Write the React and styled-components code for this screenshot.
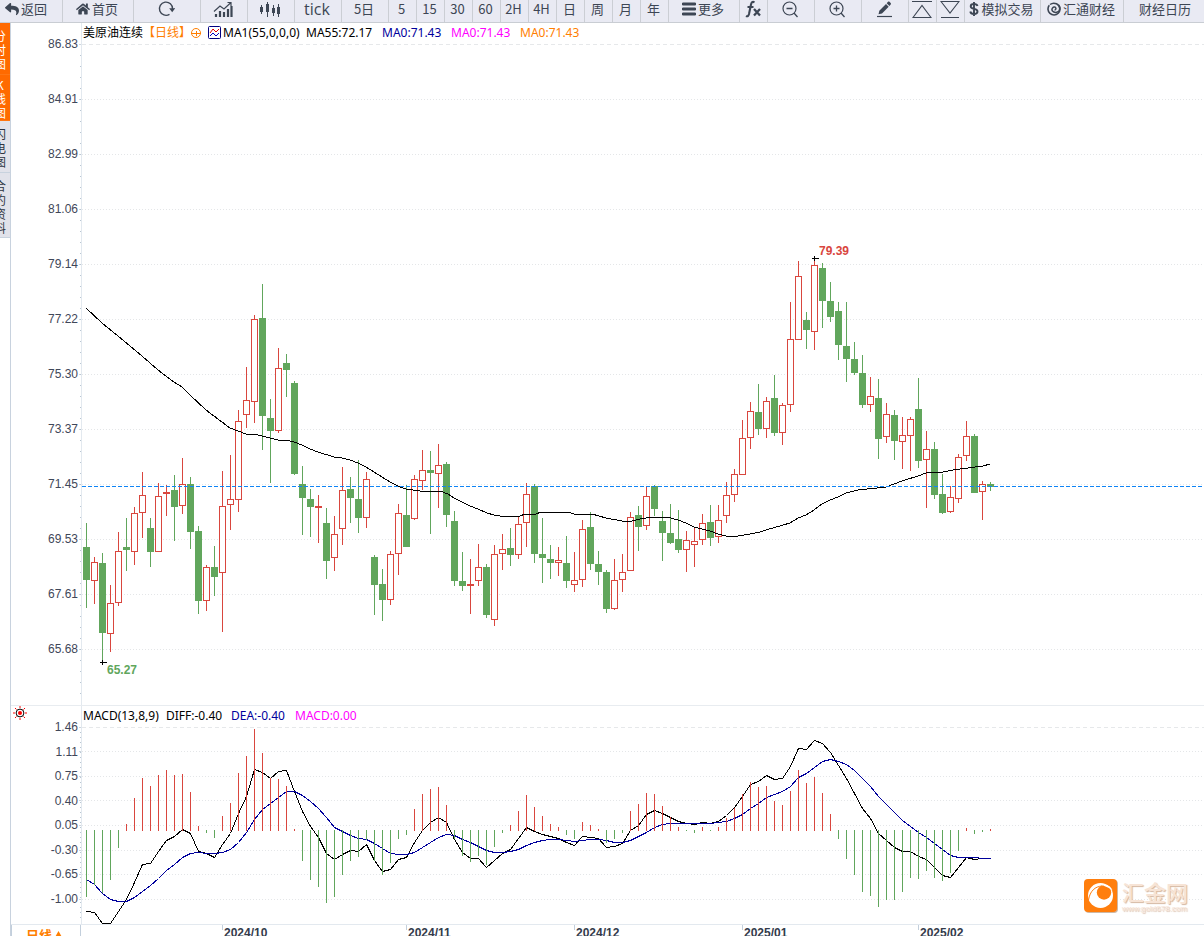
import React from "react";
import styled, { createGlobalStyle } from "styled-components";
import { FaReply, FaHome } from "react-icons/fa";

const UP = "#d9463e";
const DOWN = "#61a65c";
const INK = "#3d4654";
const CJK = '"Noto Sans CJK SC", sans-serif';

const GlobalStyle = createGlobalStyle`
  * { box-sizing: border-box; }
  body { margin: 0; background: #fff; overflow: hidden; font-family: "Liberation Sans", ${CJK}; }
  button { font: inherit; color: inherit; border: 0; padding: 0; background: none; cursor: pointer; }
`;

const Page = styled.div`
  display: flex;
  flex-direction: column;
  height: 100vh;
  overflow: hidden;
`;

const Toolbar = styled.nav`
  display: flex;
  flex: none;
  height: 23px;
  background: #e9eaf3;
  border-bottom: 1px solid #c9cdd3;
`;

const ToolButton = styled.button`
  display: flex;
  flex: ${(p) => (p.$last ? "1 0" : "0 0")} ${(p) => p.$w}px;
  align-items: center;
  justify-content: ${(p) => (p.$last ? "flex-start" : "center")};
  gap: 2px;
  && {
    padding: 0 ${(p) => p.$right || 2}px 4px ${(p) => (p.$last ? 15 : 0)}px;
    border-right: ${(p) => (p.$last ? 0 : 1)}px solid #cbced4;
    color: ${INK};
    font-family: ${(p) => (p.$latin ? '"Open Sans", sans-serif' : CJK)};
    font-size: ${(p) => (p.$latin ? 16 : 13)}px;
    line-height: 18px;
    white-space: nowrap;
  }
  svg { flex: none; }
`;

const Body = styled.div`
  display: flex;
  flex: 1;
  min-height: 0;
`;

const Sidebar = styled.aside`
  flex: none;
  width: 11px;
  border-right: 1px solid #c8d2de;
`;

const SideTab = styled.button`
  display: flex;
  justify-content: flex-end;
  width: 100%;
  overflow: hidden;
  && {
    padding: ${(p) => p.$top}px 4px ${(p) => p.$bottom}px 0;
    background: ${(p) => (p.$active ? "#ff6a00" : "#e1e2ea")};
    color: ${(p) => (p.$active ? "#fff" : "#2f3542")};
    border-bottom: 1px solid ${(p) => (p.$active ? "#ff7612" : "#c8d2de")};
    font-family: ${CJK};
    font-size: 12px;
    line-height: 14px;
  }
  span { flex: none; width: 12px; word-break: break-all; text-align: center; }
`;

const Charts = styled.main`
  display: flex;
  flex: 1;
  flex-direction: column;
  min-width: 0;
`;

const Panel = styled.section`
  display: grid;
  flex: none;
  grid-template-columns: 70px 1fr;
  border-bottom: 1px solid ${(p) => p.$line};
`;

const Axis = styled.div`
  display: flex;
  flex-direction: column;
  padding: ${(p) => p.$top}px 3px 0 0;
`;

const Scale = styled.div`
  display: flex;
  flex-direction: column;
  justify-content: space-between;
  height: ${(p) => p.$h}px;
  color: #3f4759;
  font-size: 12px;
  line-height: 14px;
  text-align: right;
`;

const PlotColumn = styled.div`
  min-width: 0;
  border-left: 1px solid #e3e9ef;
`;

const Legend = styled.div`
  display: flex;
  align-items: center;
  height: 20px;
  padding-left: 1px;
  font-family: "Noto Sans", ${CJK};
  font-size: 12px;
  line-height: 18px;
  white-space: pre;
`;

const LegendItem = styled.span`
  color: ${(p) => p.$color || "#000"};
  min-width: ${(p) => p.$w || 0}px;
`;

const LegendIcon = styled.svg`
  flex: none;
  margin-right: ${(p) => p.$gap}px;
`;

const Plot = styled.svg`
  display: block;
  width: 100%;
  height: ${(p) => p.$h}px;
  overflow: visible;
  shape-rendering: crispEdges;
`;

const DateBar = styled.div`
  display: grid;
  flex: none;
  grid-template-columns: 70px 1fr;
  height: 22px;
`;

const PeriodButton = styled.button`
  display: flex;
  justify-content: center;
  gap: 2px;
  && {
    padding-right: 3px;
    border: 1px solid #c3cfdc;
    border-top: 0;
    color: #ff7e00;
    font-family: ${CJK};
    font-size: 13px;
    font-weight: 700;
    line-height: 20px;
  }
`;

const Watermark = styled.a`
  position: absolute;
  right: 16px;
  bottom: 21px;
  display: flex;
  gap: 4px;
  color: #f7e4d6;
  font-family: ${CJK};
  text-decoration: none;
`;

const BrandText = styled.span`
  display: flex;
  flex-direction: column;
  font-size: 22px;
  font-weight: 500;
  line-height: 24px;
  text-shadow: 1px 1px 1px #d5b8a2;
  small { font-family: "Liberation Sans", sans-serif; font-size: 8px; font-weight: 400; line-height: 12px; }
`;

/* One entry per trading day: direction, high, body top, body bottom, low. */
const CANDLES = `g 523 547 580 608;r 557 562 581 604;g 553 563 633 662;r 585 603 634 652;r 532 551 603 606;g 518 547 550 571;r 507 513 552 565;r 472 495 513 538;g 518 528 552 567;r 483 496 552 552;r 485 492 494 516;g 475 490 507 541;r 458 484 506 514;g 477 484 532 549;g 526 531 601 614;r 565 567 601 611;g 546 567 577 596;r 471 506 573 632;r 455 499 505 530;r 410 421 500 512;r 367 400 415 428;r 315 319 402 423;g 284 318 416 450;g 399 418 431 483;r 348 368 431 433;g 354 363 370 397;g 381 383 474 475;g 466 484 498 535;g 489 499 507 537;r 495 506 508 543;g 508 523 561 579;r 516 534 558 571;r 467 490 529 545;g 477 489 498 523;g 460 499 518 533;r 472 479 518 528;g 555 557 585 615;g 569 584 600 621;r 551 554 600 605;r 504 513 554 575;g 485 515 547 547;r 475 479 519 520;r 450 470 481 490;g 451 470 473 534;r 444 465 474 508;g 462 464 515 527;g 511 521 581 586;g 552 581 586 591;r 559 584 586 614;r 544 567 581 586;g 564 567 615 618;r 545 554 620 626;r 534 549 554 570;g 528 548 555 566;r 517 524 555 559;r 483 494 523 547;g 484 486 554 563;g 518 554 558 583;g 545 559 563 579;r 547 560 563 576;g 536 563 581 588;r 552 580 585 592;r 520 529 580 587;g 512 527 564 570;g 551 564 572 585;g 570 572 609 613;r 559 580 609 610;r 554 572 580 592;r 512 517 571 571;g 506 515 527 551;r 487 496 526 530;g 485 486 509 516;g 511 521 533 561;g 504 533 543 544;g 510 539 550 553;r 531 540 550 572;r 527 541 545 567;r 514 523 540 545;g 505 522 538 546;r 505 520 537 543;r 482 495 516 523;r 469 474 495 502;r 420 438 475 475;r 402 411 438 449;g 384 412 429 435;r 397 401 429 438;g 375 398 433 436;r 403 405 433 445;r 302 339 405 412;r 261 276 340 340;g 312 320 330 349;r 258 265 332 350;g 263 268 301 328;g 282 301 317 322;g 302 311 345 360;g 302 346 359 382;g 342 359 373 375;g 355 373 405 408;r 377 396 405 412;g 379 398 439 459;r 403 414 437 443;g 410 415 441 460;r 417 435 442 469;r 417 419 436 471;g 378 409 461 468;r 431 449 460 508;g 442 449 495 499;g 474 494 513 514;r 486 497 512 513;r 454 457 499 503;r 421 436 456 461;g 434 436 493 493;r 481 484 492 520;g 482 484 487 491`
  .split(";")
  .map((row) => {
    const [side, ...values] = row.split(" ");
    return { side, values: values.map(Number) };
  });

const MA_LINE =
  "86,308 102,323 118,336 142,356 158,370 174,382 182,387 190,395 206,410 214,416 222,422 230,428 238,431 246,434 254,434 262,436 270,438 278,440 286,440 294,442 302,445 310,449 318,452 334,457 342,458 350,460 358,463 366,467 374,472 382,477 390,482 400,487 406,489 420,491 440,491 448,494 454,498 462,502 470,506 478,509 487,513 494,515 500,516 520,516 525,514 536,514 541,512 568,512 574,514 592,514 606,518 622,521 632,521 640,519 652,517 667,517 678,520 686,523 694,527 702,529 710,531 718,534 726,536 738,536 750,534 760,532 766,530 790,523 798,518 806,515 814,510 822,504 830,500 838,497 846,493 858,490 886,487 902,481 918,476 926,473 934,472 943,472 953,470 968,468 983,466 990,464";

const HISTOGRAM = [
  897, 885, 893, 880, 848, 824, 798, 778, 786, 775, 770, 775, 774, 792, 826, 833, 838, 816, 803, 773,
  756, 729, 753, 778, 779, 786, 829, 861, 880, 887, 903, 897, 875, 861, 857, 840, 861, 875, 863, 839,
  835, 809, 794, 789, 787, 805, 839, 856, 862, 856, 865, 847, 833, 825, 811, 795, 807, 816, 824, 827,
  835, 839, 822, 825, 829, 843, 839, 833, 811, 804, 793, 794, 806, 817, 827, 831, 833, 827, 831, 827,
  818, 808, 794, 782, 787, 786, 801, 805, 791, 770, 783, 777, 793, 814, 839, 859, 875, 892, 896, 907,
  900, 900, 892, 878, 879, 871, 878, 881, 873, 851, 828, 834, 832, 829,
];

const DIFF = [
  911, 912, 923, 923, 911, 899, 882, 864, 863, 851, 840, 836, 829, 833, 851, 853, 857, 844, 833, 813,
  796, 769, 772, 778, 771, 770, 791, 811, 826, 837, 853, 859, 854, 850, 851, 844, 860, 871, 869, 859,
  857, 842, 830, 822, 817, 822, 839, 852, 858, 858, 867, 860, 853, 849, 838, 827, 831, 834, 836, 838,
  842, 845, 836, 837, 838, 847, 846, 843, 830, 825, 814, 810, 813, 817, 821, 823, 824, 822, 823, 821,
  815, 807, 796, 784, 781, 775, 779, 778, 766, 748, 749, 740, 743, 752, 765, 778, 793, 808, 818, 833,
  840, 847, 851, 851, 856, 859, 867, 875, 877, 867, 857, 859, 858, 858,
];

const DEA = [
  879, 884, 893, 899, 901, 901, 897, 891, 885, 878, 870, 864, 857, 853, 852, 853, 853, 852, 849, 842,
  832, 819, 809, 803, 797, 791, 791, 795, 801, 808, 817, 827, 831, 835, 838, 839, 843, 848, 853, 854,
  854, 852, 847, 842, 837, 834, 835, 839, 842, 846, 850, 852, 852, 851, 849, 845, 842, 840, 839, 839,
  840, 841, 840, 839, 839, 840, 842, 842, 840, 836, 832, 827, 824, 823, 823, 823, 823, 823, 823, 822,
  821, 818, 814, 808, 803, 797, 794, 791, 786, 777, 773, 767, 761, 759, 761, 764, 770, 778, 786, 796,
  804, 812, 820, 826, 832, 837, 843, 849, 855, 857, 857, 857, 858, 858,
];

const PRICES = ["86.83", "84.91", "82.99", "81.06", "79.14", "77.22", "75.30", "73.37", "71.45", "69.53", "67.61", "65.68"];
const MACD_SCALE = ["1.46", "1.11", "0.75", "0.40", "0.05", "-0.30", "-0.65", "-1.00"];
const MACD_GRID = [727, 751, 776, 800, 825, 850, 874, 899];
const MONTHS = [[222, "2024/10"], [406, "2024/11"], [574, "2024/12"], [742, "2025/01"], [918, "2025/02"]];
const range = (from, to, step) => Array.from({ length: Math.floor((to - from) / step) + 1 }, (_, i) => from + i * step);
const dayX = (i) => 86 + i * 8;
const toPoints = (series) => series.map((y, i) => `${dayX(i) + 0.5},${y + 0.5}`).join(" ");

function GridLine({ y, dash }) {
  return (
    <>
      <line x1="82" x2="3000" y1={y + 0.5} y2={y + 0.5} stroke={dash ? "#e6e8ea" : "#e4e6e8"} strokeDasharray={dash ? "4 3" : "1 2"} />
      <rect x="79" y={y} width="2" height="1" fill="#ccd6df" />
    </>
  );
}

function Candle({ x, side, values: [high, top, bottom, low] }) {
  const color = side === "r" ? UP : DOWN;
  return (
    <g fill={color}>
      <rect x={x} y={high} width="1" height={Math.max(top - high, 0)} />
      <rect x={x} y={bottom} width="1" height={Math.max(low - bottom, 0)} />
      {side === "g" || bottom - top < 3 ? (
        <rect x={x - 3} y={top} width="7" height={bottom - top} />
      ) : (
        <rect x={x - 2.5} y={top + 0.5} width="6" height={bottom - top - 1} fill="#fff" stroke={color} />
      )}
    </g>
  );
}

function PricePlot() {
  return (
    <Plot $h={662} role="img" aria-label="美原油连续 日线">
      <g transform="translate(-82 -43)">
        {range(44, 649, 55).map((y, i) => <GridLine key={y} y={y} dash={i === 0} />)}
        {range(55, 693, 11).map((y) => <rect key={y} x="80" y={y} width="1" height="1" fill="#b9c6d2" />)}
        {CANDLES.map((c, i) => <Candle key={i} x={dayX(i)} {...c} />)}
        <polyline points={MA_LINE} fill="none" stroke="#000" />
        <line x1="82" x2="3000" y1="486.5" y2="486.5" stroke="#0f84f5" strokeDasharray="4 2" />
        <path d="M100 662.5h7M102.5 660v5M812 258.5h7M814.5 256v5" stroke="#000" />
        <text x="107" y="674" fontSize="12" fontWeight="700" fill={DOWN}>65.27</text>
        <text x="819" y="255" fontSize="12" fontWeight="700" fill={UP}>79.39</text>
      </g>
    </Plot>
  );
}

function MacdPlot() {
  return (
    <Plot $h={198} role="img" aria-label="MACD">
      <g transform="translate(-82 -726)">
        {MACD_GRID.map((y, i) => <GridLine key={y} y={y} dash={i === 0} />)}
        {range(732, 919, 5).map((y) => <rect key={y} x="80" y={y} width="1" height="1" fill="#b9c6d2" />)}
        <polyline points={toPoints(DIFF)} fill="none" stroke="#000" />
        <polyline points={toPoints(DEA)} fill="none" stroke="#00009c" />
        {HISTOGRAM.map((y, i) =>
          y > 830
            ? <rect key={i} x={dayX(i)} y="830" width="1" height={y - 830} fill={DOWN} />
            : <rect key={i} x={dayX(i)} y={y} width="1" height={831 - y} fill={UP} />
        )}
      </g>
    </Plot>
  );
}

const Icon = ({ w = 18, h = 18, children, ...rest }) => (
  <svg width={w} height={h} viewBox={`0 0 ${w} ${h}`} fill="none" stroke={INK} strokeWidth="1.4" aria-hidden="true" {...rest}>
    {children}
  </svg>
);

const RefreshIcon = () => (
  <Icon>
    <path d="M12.5 14.3A6.6 6.6 0 1 1 15.6 9" />
    <path d="M12.2 8.2h6l-3 4z" fill={INK} stroke="none" />
  </Icon>
);
const TrendIcon = () => (
  <Icon w={20} h={18}>
    <path d="M3 17v-3M7 17v-6M11 17v-5M15 17V9M18.500 17V6" strokeWidth="2.200" />
    <path d="M1 11.500 7 6l4 3 7-6.500M14.500 2.500H18V6" strokeWidth="1.200" />
  </Icon>
);
const CandlesIcon = () => (
  <Icon w={22} h={18}>
    <path d="M2.500 5v9M8.500 2v15M14.500 5v11M19.500 4v13" strokeWidth="1" />
    <path d="M2.500 7v5M8.500 4v8M14.500 8v5M19.500 7v7" strokeWidth="3" />
  </Icon>
);
const MenuIcon = () => (
  <Icon w={14} h={14}>
    <path d="M1 2h12M1 7h12M1 12h12" strokeWidth="2.800" strokeLinecap="round" />
  </Icon>
);
const FxIcon = () => (
  <Icon w={18} h={18}>
    <path d="M10.500 2.300C8.500 1.200 7.500 2.300 7 4.500L5 14c-.5 2-1.500 2.800-3 2M3.500 7h6" strokeWidth="2.100" />
    <path d="m10 9 6 6.500M16 9l-6 6.500" strokeWidth="2.300" />
  </Icon>
);
const ZoomIcon = ({ plus }) => (
  <Icon>
    <circle cx="8.500" cy="8.500" r="6.500" strokeWidth="1.200" />
    <path d={plus ? "M5.500 8.500h6M8.500 5.500v6M13 13l3.500 4" : "M5.500 8.500h6M13 13l3.500 4"} strokeWidth="1.300" />
  </Icon>
);
const PencilIcon = () => (
  <Icon w={18} h={18}>
    <path d="M2 16.500h15" strokeWidth="1.200" />
    <path d="m3.500 14.200.8-3.500 6.700-6.700 2.700 2.700L7 13.400zM11.700 3.300l1.300-1.500c.5-.5 1-.4 1.500 0l1.200 1.200c.4.5.4 1 0 1.500L14.400 6z" fill={INK} stroke="none" />
  </Icon>
);
const PeakIcon = ({ down }) => (
  <Icon w={20} h={18}>
    <path d={down ? "M1 1.500h18L10 13zM1 17.500h18" : "M0 1.500h20M1 17.500h18L10 5.500z"} strokeWidth="1.100" />
  </Icon>
);
const SwirlIcon = () => (
  <Icon w={14} h={14}>
    <path d="M2.300 3.200A6 6 0 1 0 11.500 3" strokeWidth="1.600" />
    <path d="M3 2.500C7-.5 13 2 12.700 7c-.3 3.500-5 4.500-7.200 2C4 7 6 4.500 8 5c1.500 1 1 3-.5 3" strokeWidth="1.500" />
  </Icon>
);
const DollarIcon = () => (
  <Icon w={10} h={16}>
    <path d="M5 1v14M8.500 5C8 3.300 6.700 3 5 3 3 3 1.700 3.800 1.700 5.300c0 3.600 6.800 1.700 6.800 5.200C8.500 12 7 13 5 13c-2 0-3.400-.8-3.700-2.500" strokeWidth="1.900" />
  </Icon>
);

const TOOLS = [
  { w: 63, icon: <FaReply size={14} />, text: "返回", right: 10 },
  { w: 71, icon: <FaHome size={14} />, text: "首页" },
  { w: 67, icon: <RefreshIcon />, label: "刷新" },
  { w: 47, icon: <TrendIcon />, label: "分时" },
  { w: 47, icon: <CandlesIcon />, label: "K线" },
  { w: 47, text: "tick", latin: true },
  { w: 47, text: "5日" },
  { w: 28, text: "5" },
  { w: 28, text: "15" },
  { w: 28, text: "30" },
  { w: 28, text: "60" },
  { w: 28, text: "2H" },
  { w: 28, text: "4H" },
  { w: 28, text: "日" },
  { w: 28, text: "周" },
  { w: 28, text: "月" },
  { w: 28, text: "年" },
  { w: 71, icon: <MenuIcon />, text: "更多" },
  { w: 28, icon: <FxIcon />, label: "指标" },
  { w: 47, icon: <ZoomIcon />, label: "缩小" },
  { w: 47, icon: <ZoomIcon plus />, label: "放大" },
  { w: 47, icon: <PencilIcon />, label: "画线" },
  { w: 28, icon: <PeakIcon />, label: "上移" },
  { w: 28, icon: <PeakIcon down />, label: "下移" },
  { w: 76, icon: <DollarIcon />, text: "模拟交易" },
  { w: 83, icon: <SwirlIcon />, text: "汇通财经" },
  { w: 80, text: "财经日历" },
];

export default function App() {
  return (
    <Page>
      <GlobalStyle />
      <Toolbar>
        {TOOLS.map((t, i) => (
          <ToolButton key={i} type="button" $w={t.w} $right={t.right} $latin={t.latin} $last={i === TOOLS.length - 1} aria-label={t.label}>
            {t.icon}
            {t.text}
          </ToolButton>
        ))}
      </Toolbar>
      <Body>
        <Sidebar>
          <SideTab type="button" $active $top={6} $bottom={3}><span>分时图</span></SideTab>
          <SideTab type="button" $active $top={3} $bottom={0}><span>K线图</span></SideTab>
          <SideTab type="button" $top={6} $bottom={3}><span>闪电图</span></SideTab>
          <SideTab type="button" $top={6} $bottom={2}><span>合约资料</span></SideTab>
        </Sidebar>
        <Charts>
          <Panel $line="#e8ecf0">
            <Axis $top={14}>
              <Scale $h={619}>{PRICES.map((p) => <span key={p}>{p}</span>)}</Scale>
            </Axis>
            <PlotColumn>
              <Legend>
                <LegendItem>美原油连续</LegendItem>
                <LegendItem $color="#ff7e00">【日线】</LegendItem>
                <LegendIcon $gap={7} width="10" height="10" viewBox="0 0 10 10" fill="none" stroke="#ff7e00">
                  <circle cx="5" cy="5" r="4.500" />
                  <path d="M0 5.500h10M5.500 3v5" />
                </LegendIcon>
                <LegendIcon $gap={2} width="13" height="14" viewBox="0 0 13 14" fill="none">
                  <rect x=".5" y=".5" width="12" height="12" rx="1" stroke="#000080" fill="#fff" />
                  <path d="m2 7 3-4 3 3 3-3" stroke="#e00000" />
                  <path d="m2 10 3-3 3 3 3-3" stroke="#0000c0" />
                </LegendIcon>
                <LegendItem $w={83}>MA1(55,0,0,0)</LegendItem>
                <LegendItem $w={76}>MA55:72.17</LegendItem>
                <LegendItem $w={69} $color="#00009c">MA0:71.43</LegendItem>
                <LegendItem $w={69} $color="#f0f">MA0:71.43</LegendItem>
                <LegendItem $w={69} $color="#ff7e00">MA0:71.43</LegendItem>
              </Legend>
              <PricePlot />
            </PlotColumn>
          </Panel>
          <Panel $line="#e3e9ef">
            <Axis $top={0}>
              <svg width="18" height="14" viewBox="0 0 18 14" fill="none" aria-hidden="true">
                <path d="M9 0v2M9 12v2M2 7h2M14 7h2M4 2l1.500 1.500M14 2l-1.500 1.500M4 12l1.500-1.500M14 12l-1.500-1.500" stroke="#f00" />
                <circle cx="9" cy="7" r="3.900" stroke="#000" />
                <circle cx="9" cy="7" r="2" fill="#f00" />
              </svg>
              <Scale $h={186}>{MACD_SCALE.map((v) => <span key={v}>{v}</span>)}</Scale>
            </Axis>
            <PlotColumn>
              <Legend>
                <LegendItem $w={83}>MACD(13,8,9)</LegendItem>
                <LegendItem $w={65}>DIFF:-0.40</LegendItem>
                <LegendItem $w={64} $color="#00009c">DEA:-0.40</LegendItem>
                <LegendItem $color="#f0f">MACD:0.00</LegendItem>
              </Legend>
              <MacdPlot />
            </PlotColumn>
          </Panel>
          <DateBar>
            <PeriodButton type="button">日线 <svg width="9" height="20" viewBox="0 0 9 20" aria-hidden="true"><path d="M0 14 4.500 6 9 14z" fill="#ff7e00" /></svg></PeriodButton>
            <Plot $h={22} role="img" aria-label="日期">
              <g transform="translate(-81 0)">
                {MONTHS.map(([x, label]) => (
                  <g key={label}>
                    <rect x={x} y="0" width="1" height="5" fill="#c3cfdc" />
                    <text x={x + 2} y="12" fontSize="12" fontWeight="700" fill="#333b4b">{label}</text>
                  </g>
                ))}
              </g>
            </Plot>
          </DateBar>
        </Charts>
      </Body>
      <Watermark href="#home">
        <svg width="34" height="34" viewBox="0 0 34 34" aria-hidden="true">
          <rect x="1" y="1" width="33" height="33" rx="4" fill="#cdb8a6" />
          <rect width="33" height="33" rx="4" fill="#ff7e0d" />
          <circle cx="16.500" cy="16.500" r="12.500" fill="#fff" />
          <circle cx="20" cy="13.500" r="7.200" fill="#ff7e0d" />
          <path d="M19 6.500C24 5 27 8 28.500 11.500L25 9z" fill="#fff" />
          <path d="M4.500 21C6 12 11 7.500 18 7" fill="none" stroke="#ff7e0d" strokeWidth="1" />
        </svg>
        <BrandText>汇金网<small>www.gold678.com</small></BrandText>
      </Watermark>
    </Page>
  );
}
